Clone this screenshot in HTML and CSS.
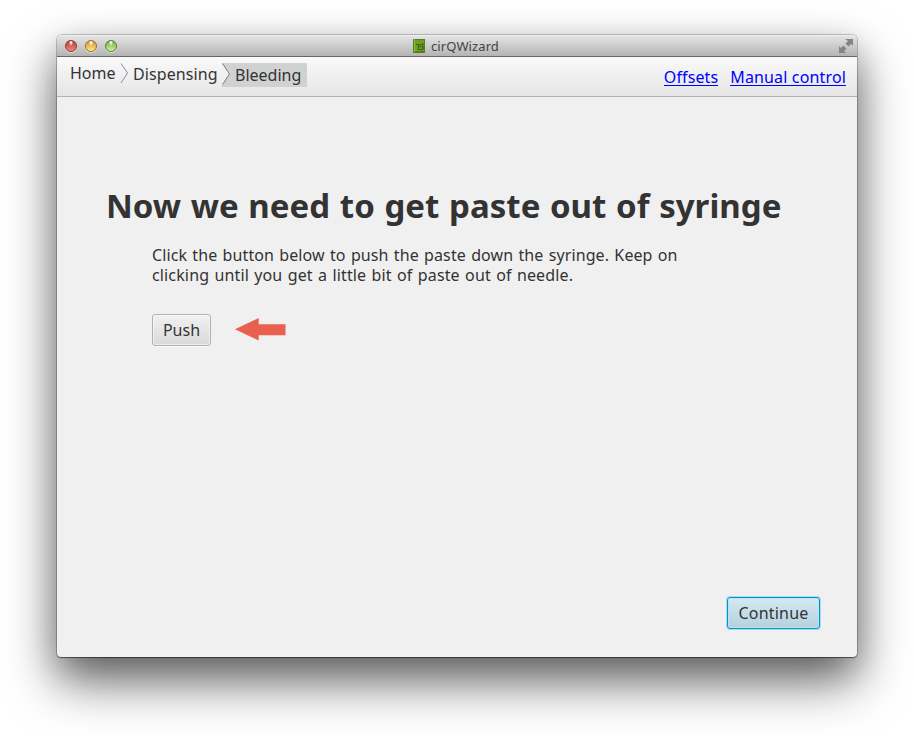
FILE: index.html
```html
<!DOCTYPE html>
<html lang="en">
<head>
<meta charset="utf-8">
<title>cirQWizard</title>
<link rel="stylesheet" href="styles.css">
</head>
<body>
<div class="window">
  <header class="titlebar">
    <div class="lights"><i class="light red"></i><i class="light yellow"></i><i class="light green"></i></div>
    <div class="title">
      <svg width="12" height="14" viewBox="0 0 12 14"><rect width="12" height="14" fill="#557f1c"/><rect x="2" y="1" width="9" height="11" fill="#6f9e22"/><path d="M1.500 0v13" stroke="#94bd3e"/><path d="M3 5.500h7M5.500 6v4.500h4V7.500H6M10 4v7" fill="none" stroke="#3f6b12"/></svg>
      <span>cirQWizard</span>
    </div>
    <svg class="expand" width="14" height="14" viewBox="0 0 14 14"><path d="M6 0h8v7l-2-2-2.500 2.500-3-3L9 2zM0 7l2 2 2.500-2.500 3 3L5 12l2 2H0z" fill="#858585"/></svg>
  </header>
  <nav class="toolbar">
    <div class="crumbs">
      <span class="crumb home">Home</span>
      <svg class="chevron" width="9" height="21" viewBox="0 0 9 21"><path d="M1 .5l6.500 9.500L1 20" fill="none" stroke="#888c92"/></svg>
      <span class="crumb dispensing">Dispensing</span>
      <span class="current"><svg width="9" height="23" viewBox="0 0 9 23"><path d="M0 0l8 11-8 11z" fill="#f0f0f0"/><path d="M.5.5L7.500 11 .5 21.500" fill="none" stroke="#777b80"/></svg><span class="crumb bleeding">Bleeding</span></span>
    </div>
    <div class="links"><a href="#" class="offsets">Offsets</a><a href="#" class="manual">Manual control</a></div>
  </nav>
  <main class="content">
    <h1>Now we need to get paste out of syringe</h1>
    <p><span class="line-one">Click the button below to push the paste down the syringe. Keep on</span><br><span class="line-two">clicking until you get a little bit of paste out of needle.</span></p>
    <div class="action">
      <button class="push"><span>Push</span></button>
      <svg width="52" height="24" viewBox="0 0 52 24"><path d="M1 11.300L24.700 0v6.200H51.500v11H24.700v5.300z" fill="#e9604e"/></svg>
    </div>
    <button class="continue"><span>Continue</span></button>
  </main>
</div>
</body>
</html>
```
FILE: styles.css
```css
* { box-sizing: border-box; }
body {
  margin: 0;
  height: 736px;
  padding: 35px 57px;
  overflow: hidden;
  background: #fff;
  color: #333;
  font: 16px/20px "Noto Sans", "Open Sans", sans-serif;
}
.window {
  width: 800px;
  height: 622px;
  display: flex;
  flex-direction: column;
  border-radius: 5px 5px 4px 4px;
  background: #f0f0f0;
  box-shadow: 0 0 0 1px rgba(0,0,0,.2), 0 1px 1px rgba(0,0,0,.4), 0 24px 50px rgba(0,0,0,.6), 0 10px 30px rgba(0,0,0,.15);
}
.titlebar {
  height: 22px;
  display: grid;
  grid-template-columns: 1fr auto 1fr;
  align-items: center;
  padding: 0 4px 0 8px;
  border-bottom: 1px solid #666;
  border-radius: 5px 5px 0 0;
  background: linear-gradient(#e6e6e6, #b4b4b4);
  box-shadow: inset 0 1px #f0f0f0;
}
.lights { display: flex; gap: 8px; }
.light {
  width: 12px;
  height: 12px;
  border-radius: 50%;
  border: 1px solid;
  box-shadow: 0 1px rgba(255,255,255,.5);
}
.red { border-color: #8c3934; background: radial-gradient(ellipse at 50% 15%, #fff 5%, transparent 30%), linear-gradient(#b93731, #f28b7e); }
.yellow { border-color: #99712d; background: radial-gradient(ellipse at 50% 15%, #fff 5%, transparent 30%), linear-gradient(#d48d2b, #ffec8d); }
.green { border-color: #57843b; background: radial-gradient(ellipse at 50% 15%, #fff 5%, transparent 30%), linear-gradient(#71a943, #d0f5a0); }
.title { display: flex; align-items: center; gap: 6px; margin-right: 4px; font-size: 13px; line-height: 20px; letter-spacing: .1px; color: #444; }
.title svg { margin-left: -2px; }
.expand { justify-self: end; }
.toolbar {
  height: 40px;
  display: flex;
  justify-content: space-between;
  padding: 6px 11px 0 13px;
  border-bottom: 1px solid #b2b2b2;
  background: linear-gradient(#fafafa, #e5e5e5);
}
.crumbs { display: flex; align-items: flex-start; }
.home { width: 50px; }
.chevron { margin-right: 4px; }
.dispensing { width: 89px; padding-top: 1px; letter-spacing: .1px; }
.current { display: flex; width: 85px; height: 24px; background: #d0d2d2; }
.bleeding { padding: 2px 0 0 4px; }
.links { display: flex; gap: 12px; padding-top: 4px; }
.links a { height: 19px; line-height: 20px; color: #00f; text-decoration: none; border-bottom: 1px solid #00f; }
.offsets { letter-spacing: .12px; }
.manual { letter-spacing: .15px; }
.content { flex: 1; display: flex; flex-direction: column; padding: 89px 37px 28px 49px; }
h1 { margin: 0; font-size: 33px; line-height: 40px; font-weight: 700; letter-spacing: .03px; word-spacing: 1px; white-space: nowrap; }
p { margin: 19px 0 0 46px; white-space: nowrap; }
.line-one { letter-spacing: .1px; word-spacing: 1px; }
.line-two { letter-spacing: .14px; word-spacing: 1px; }
.action { display: flex; align-items: center; gap: 23px; margin: 29px 0 0 46px; }
button {
  height: 32px;
  padding: 0;
  border: 1px solid #b1b1b1;
  border-radius: 3px;
  background: linear-gradient(#f1f1f1, #d9d9d9);
  box-shadow: inset 0 0 0 1px rgba(255,255,255,.5), 0 1px #fafafa;
  color: #333;
  font: inherit;
}
.push { width: 59px; }
.continue {
  width: 93px;
  margin: auto 0 0 auto;
  letter-spacing: .2px;
  border-color: #0096c9;
  background: linear-gradient(#d3e9f3, #b5d0de);
  box-shadow: inset 0 0 0 1px #bee3f0, 0 0 0 1px #a7dcef;
}
```
